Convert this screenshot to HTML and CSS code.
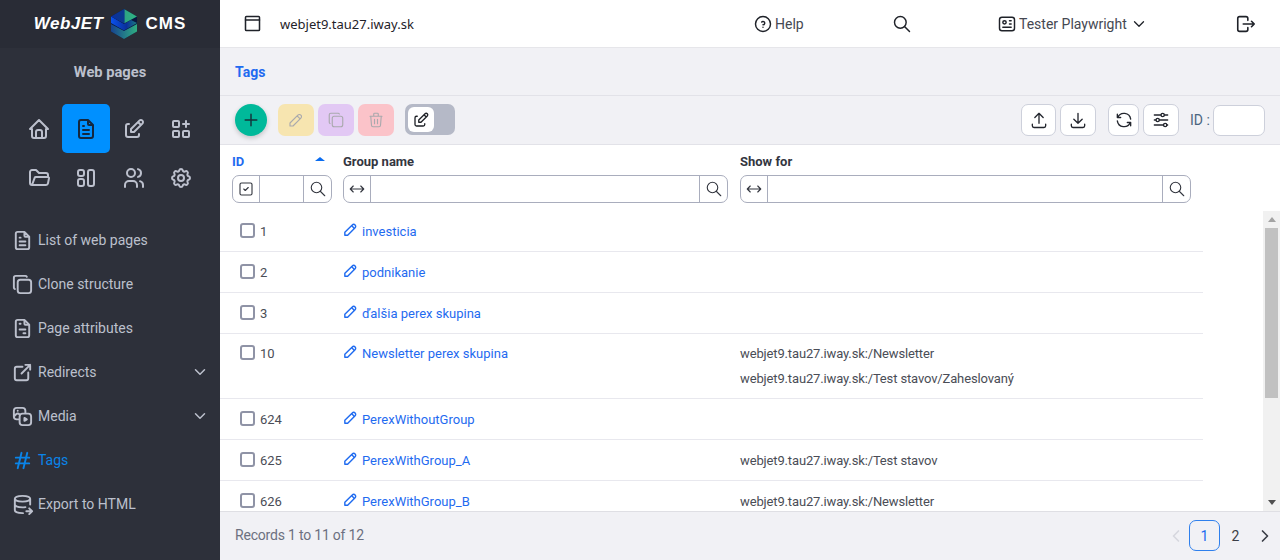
FILE: index.html
```html
<!DOCTYPE html>
<html lang="en">
<head>
  <meta charset="UTF-8">
  <title>Tags</title>
  <link rel="stylesheet" href="styles.css">
</head>
<body>

  <svg class="sprite" xmlns="http://www.w3.org/2000/svg">
    <symbol id="i-home" viewBox="0 0 24 24"><path d="M5 12h-2l9-9l9 9h-2M5 12v7a2 2 0 0 0 2 2h10a2 2 0 0 0 2-2v-7M9 21v-6a2 2 0 0 1 2-2h2a2 2 0 0 1 2 2v6"/></symbol>
    <symbol id="i-file" viewBox="0 0 24 24"><path d="M14 3v4a1 1 0 0 0 1 1h4M17 21h-10a2 2 0 0 1-2-2v-14a2 2 0 0 1 2-2h7l5 5v11a2 2 0 0 1-2 2zM9 9h1M9 13h6M9 17h6"/></symbol>
    <symbol id="i-attr" viewBox="0 0 24 24"><path d="M14 3v4a1 1 0 0 0 1 1h4M17 21h-10a2 2 0 0 1-2-2v-14a2 2 0 0 1 2-2h7l5 5v11a2 2 0 0 1-2 2zM9 7h1M9 13h6M13 17h2"/></symbol>
    <symbol id="i-edit" viewBox="0 0 24 24"><path d="M7 7h-1a2 2 0 0 0-2 2v9a2 2 0 0 0 2 2h9a2 2 0 0 0 2-2v-1M20.385 6.585a2.1 2.1 0 0 0-2.97-2.97l-8.415 8.385v3h3l8.385-8.415zM16 5l3 3"/></symbol>
    <symbol id="i-apps" viewBox="0 0 24 24"><rect x="4" y="4" width="6" height="6" rx="1"/><rect x="4" y="14" width="6" height="6" rx="1"/><rect x="14" y="14" width="6" height="6" rx="1"/><path d="M14 7h6M17 4v6"/></symbol>
    <symbol id="i-folder" viewBox="0 0 24 24"><path d="M5 19l2.757-7.351a1 1 0 0 1 .936-.649h12.307a1 1 0 0 1 .986 1.164l-.996 5.211a2 2 0 0 1-1.964 1.625h-14.026a2 2 0 0 1-2-2v-11a2 2 0 0 1 2-2h4l3 3h7a2 2 0 0 1 2 2v2"/></symbol>
    <symbol id="i-layout" viewBox="0 0 24 24"><rect x="4" y="4" width="6" height="6" rx="2"/><rect x="4" y="13" width="6" height="7" rx="2"/><rect x="14" y="4" width="6" height="16" rx="2"/></symbol>
    <symbol id="i-users" viewBox="0 0 24 24"><circle cx="9" cy="7" r="4"/><path d="M3 21v-2a4 4 0 0 1 4-4h4a4 4 0 0 1 4 4v2M16 3.13a4 4 0 0 1 0 7.75M21 21v-2a4 4 0 0 0-3-3.85"/></symbol>
    <symbol id="i-settings" viewBox="0 0 24 24"><path d="M10.325 4.317c.426-1.756 2.924-1.756 3.35 0a1.724 1.724 0 0 0 2.573 1.066c1.543-.94 3.31 .826 2.37 2.37a1.724 1.724 0 0 0 1.065 2.572c1.756 .426 1.756 2.924 0 3.35a1.724 1.724 0 0 0-1.066 2.573c.94 1.543-.826 3.31-2.37 2.37a1.724 1.724 0 0 0-2.572 1.065c-.426 1.756-2.924 1.756-3.35 0a1.724 1.724 0 0 0-2.573-1.066c-1.543 .94-3.31-.826-2.37-2.37a1.724 1.724 0 0 0-1.065-2.572c-1.756-.426-1.756-2.924 0-3.35a1.724 1.724 0 0 0 1.066-2.573c-.94-1.543 .826-3.31 2.37-2.37c1 .608 2.296 .07 2.572-1.065z"/><circle cx="12" cy="12" r="3"/></symbol>
    <symbol id="i-copy" viewBox="0 0 24 24"><path d="M7 9.667a2.667 2.667 0 0 1 2.667-2.667h8.666a2.667 2.667 0 0 1 2.667 2.667v8.666a2.667 2.667 0 0 1-2.667 2.667h-8.666a2.667 2.667 0 0 1-2.667-2.667zM4.012 16.737a2.005 2.005 0 0 1-1.012-1.737v-10c0-1.1 .9-2 2-2h10c.75 0 1.158 .385 1.5 1"/></symbol>
    <symbol id="i-link" viewBox="0 0 24 24"><path d="M12 6h-6a2 2 0 0 0-2 2v10a2 2 0 0 0 2 2h10a2 2 0 0 0 2-2v-6M11 13l9-9M15 4h5v5"/></symbol>
    <symbol id="i-media" viewBox="0 0 24 24"><path d="M9 15h-3a3 3 0 0 1-3-3v-6a3 3 0 0 1 3-3h6a3 3 0 0 1 3 3v3M9 12a3 3 0 0 1 3-3h6a3 3 0 0 1 3 3v6a3 3 0 0 1-3 3h-6a3 3 0 0 1-3-3zM3 12l2.296-2.296a2.41 2.41 0 0 1 3.408 0l.296 .296M14 13.5v3l2.5-1.5zM7 6v.01"/></symbol>
    <symbol id="i-hash" viewBox="0 0 24 24"><path d="M5 9h14M5 15h14M11 4l-4 16M17 4l-4 16"/></symbol>
    <symbol id="i-export" viewBox="0 0 24 24"><path d="M4 6c0 1.657 3.582 3 8 3s8-1.343 8-3s-3.582-3-8-3s-8 1.343-8 3M4 6v6c0 1.657 3.582 3 8 3c1.075 0 2.1-.08 3.037-.224M20 12v-6M4 12v6c0 1.657 3.582 3 8 3c.166 0 .331-.002 .495-.006M16 19h6M19 16l3 3l-3 3"/></symbol>
    <symbol id="i-down" viewBox="0 0 24 24"><path d="M6 9l6 6l6-6"/></symbol>
    <symbol id="i-left" viewBox="0 0 24 24"><path d="M15 6l-6 6l6 6"/></symbol>
    <symbol id="i-right" viewBox="0 0 24 24"><path d="M9 6l6 6l-6 6"/></symbol>
    <symbol id="i-browser" viewBox="0 0 24 24"><rect x="4" y="4" width="16" height="16" rx="1"/><path d="M4 8h16"/></symbol>
    <symbol id="i-help" viewBox="0 0 24 24"><circle cx="12" cy="12" r="9"/><path d="M12 16v.01M12 13a2 2 0 0 0 .914-3.782a1.98 1.98 0 0 0-2.414 .483"/></symbol>
    <symbol id="i-search" viewBox="0 0 24 24"><circle cx="10" cy="10" r="7"/><path d="M21 21l-6-6"/></symbol>
    <symbol id="i-id" viewBox="0 0 24 24"><rect x="3" y="4" width="18" height="16" rx="3"/><circle cx="9" cy="10" r="2"/><path d="M15 8h2M15 12h2M7 16h10"/></symbol>
    <symbol id="i-logout" viewBox="0 0 24 24"><path d="M14 8v-2a2 2 0 0 0-2-2h-7a2 2 0 0 0-2 2v12a2 2 0 0 0 2 2h7a2 2 0 0 0 2-2v-2M9 12h12l-3-3M18 15l3-3"/></symbol>
    <symbol id="i-plus" viewBox="0 0 24 24"><path d="M12 5v14M5 12h14"/></symbol>
    <symbol id="i-pencil" viewBox="0 0 24 24"><path d="M4 20h4l10.5-10.5a2.828 2.828 0 1 0-4-4l-10.5 10.5v4M13.5 6.5l4 4"/></symbol>
    <symbol id="i-trash" viewBox="0 0 24 24"><path d="M4 7h16M10 11v6M14 11v6M5 7l1 12a2 2 0 0 0 2 2h8a2 2 0 0 0 2-2l1-12M9 7v-3a1 1 0 0 1 1-1h4a1 1 0 0 1 1 1v3"/></symbol>
    <symbol id="i-upload" viewBox="0 0 24 24"><path d="M4 17v2a2 2 0 0 0 2 2h12a2 2 0 0 0 2-2v-2M7 9l5-5l5 5M12 4v12"/></symbol>
    <symbol id="i-download" viewBox="0 0 24 24"><path d="M4 17v2a2 2 0 0 0 2 2h12a2 2 0 0 0 2-2v-2M7 11l5 5l5-5M12 4v12"/></symbol>
    <symbol id="i-refresh" viewBox="0 0 24 24"><path d="M20 11a8.1 8.1 0 0 0-15.5-2m-.5-4v4h4M4 13a8.1 8.1 0 0 0 15.5 2m.5 4v-4h-4"/></symbol>
    <symbol id="i-sliders" viewBox="0 0 24 24"><circle cx="14" cy="6" r="2"/><path d="M4 6h8M16 6h4"/><circle cx="8" cy="12" r="2"/><path d="M4 12h2M10 12h10"/><circle cx="17" cy="18" r="2"/><path d="M4 18h11M19 18h1"/></symbol>
    <symbol id="i-check" viewBox="0 0 24 24"><rect x="4" y="4" width="16" height="16" rx="2"/><path d="M9 12l2 2l4-4"/></symbol>
    <symbol id="i-arrows" viewBox="0 0 24 24"><path d="M7 8l-4 4l4 4M17 8l4 4l-4 4M3 12h18"/></symbol>
  </svg>

  <div class="app">
    <aside class="sidebar">
      <div class="logo">
        <span class="logo-text">WebJET</span>
        <svg class="logo-mark" viewBox="0 0 26 30">
          <defs>
            <linearGradient id="lg-top"><stop offset="0" stop-color="#0b2fa0"/><stop offset=".5" stop-color="#0b3a8c"/><stop offset=".55" stop-color="#2ea583"/><stop offset="1" stop-color="#2fb583"/></linearGradient>
            <linearGradient id="lg-mid"><stop offset="0" stop-color="#0a52ee"/><stop offset=".6" stop-color="#0a2f9a"/><stop offset="1" stop-color="#1c7f80"/></linearGradient>
            <linearGradient id="lg-bot"><stop offset="0" stop-color="#17438f"/><stop offset="1" stop-color="#2fae82"/></linearGradient>
          </defs>
          <polygon points="13,0 26,7.5 26,22.5 13,30 0,22.5 0,7.5" fill="#08163f"/>
          <polygon points="0,15 13,22 26,15 26,22.5 13,30 0,22.5" fill="url(#lg-bot)"/>
          <polygon points="0,7.5 13,15 20,11 26,14 13,21.5 0,14" fill="url(#lg-mid)"/>
          <polygon points="13,0 26,7.5 13,14.5 0,7.5" fill="url(#lg-top)"/>
        </svg>
        <span class="logo-text logo-cms">CMS</span>
      </div>
      <div class="side-title">Web pages</div>
      <div class="side-icons">
        <a class="side-icon"><svg class="ico"><use href="#i-home"/></svg></a>
        <a class="side-icon active"><svg class="ico"><use href="#i-file"/></svg></a>
        <a class="side-icon"><svg class="ico"><use href="#i-edit"/></svg></a>
        <a class="side-icon"><svg class="ico"><use href="#i-apps"/></svg></a>
        <a class="side-icon"><svg class="ico"><use href="#i-folder"/></svg></a>
        <a class="side-icon"><svg class="ico"><use href="#i-layout"/></svg></a>
        <a class="side-icon"><svg class="ico"><use href="#i-users"/></svg></a>
        <a class="side-icon"><svg class="ico"><use href="#i-settings"/></svg></a>
      </div>
      <ul class="side-menu">
        <li><svg class="ico"><use href="#i-file"/></svg>List of web pages</li>
        <li><svg class="ico"><use href="#i-copy"/></svg>Clone structure</li>
        <li><svg class="ico"><use href="#i-attr"/></svg>Page attributes</li>
        <li><svg class="ico"><use href="#i-link"/></svg>Redirects<svg class="ico caret"><use href="#i-down"/></svg></li>
        <li><svg class="ico"><use href="#i-media"/></svg>Media<svg class="ico caret"><use href="#i-down"/></svg></li>
        <li class="current"><svg class="ico"><use href="#i-hash"/></svg>Tags</li>
        <li><svg class="ico"><use href="#i-export"/></svg>Export to HTML</li>
      </ul>
    </aside>

    <main class="main">
      <header class="topbar">
        <div class="top-domain"><svg class="ico"><use href="#i-browser"/></svg><span>webjet9.tau27.iway.sk</span></div>
        <div class="top-help"><svg class="ico"><use href="#i-help"/></svg><span>Help</span></div>
        <div class="top-search"><svg class="ico"><use href="#i-search"/></svg></div>
        <div class="top-user"><svg class="ico"><use href="#i-id"/></svg><span>Tester Playwright</span><svg class="ico"><use href="#i-down"/></svg></div>
        <div class="top-logout"><svg class="ico"><use href="#i-logout"/></svg></div>
      </header>

      <div class="titlebar">Tags</div>

      <div class="toolbar">
        <button class="btn-add"><svg class="ico"><use href="#i-plus"/></svg></button>
        <button class="btn-soft yellow"><svg class="ico"><use href="#i-pencil"/></svg></button>
        <button class="btn-soft purple"><svg class="ico"><use href="#i-copy"/></svg></button>
        <button class="btn-soft red"><svg class="ico"><use href="#i-trash"/></svg></button>
        <div class="toggle"><span class="knob"><svg class="ico"><use href="#i-edit"/></svg></span></div>
        <div class="tools">
          <button class="btn-tool w35"><svg class="ico"><use href="#i-upload"/></svg></button>
          <button class="btn-tool w36"><svg class="ico"><use href="#i-download"/></svg></button>
          <button class="btn-tool w31 gap"><svg class="ico"><use href="#i-refresh"/></svg></button>
          <button class="btn-tool w36"><svg class="ico"><use href="#i-sliders"/></svg></button>
          <label class="id-label">ID :</label>
          <input class="id-input" type="text">
        </div>
      </div>

      <div class="thead">
        <div class="th-labels">
          <div class="th sorted">ID<span class="sort-arrow"></span></div>
          <div class="th">Group name</div>
          <div class="th">Show for</div>
        </div>
        <div class="th-filters">
          <div class="filter f-id"><span class="f-btn"><svg class="ico"><use href="#i-check"/></svg></span><input type="text"><span class="f-btn"><svg class="ico"><use href="#i-search"/></svg></span></div>
          <div class="filter f-name"><span class="f-btn"><svg class="ico"><use href="#i-arrows"/></svg></span><input type="text"><span class="f-btn"><svg class="ico"><use href="#i-search"/></svg></span></div>
          <div class="filter"><span class="f-btn"><svg class="ico"><use href="#i-arrows"/></svg></span><input type="text"><span class="f-btn"><svg class="ico"><use href="#i-search"/></svg></span></div>
        </div>
      </div>

      <div class="tbody">
        <div class="rows">
          <div class="row"><div class="c-id"><span class="box"></span>1</div><div class="c-name"><svg class="ico"><use href="#i-pencil"/></svg><a>investicia</a></div><div class="c-show"></div></div>
          <div class="row"><div class="c-id"><span class="box"></span>2</div><div class="c-name"><svg class="ico"><use href="#i-pencil"/></svg><a>podnikanie</a></div><div class="c-show"></div></div>
          <div class="row"><div class="c-id"><span class="box"></span>3</div><div class="c-name"><svg class="ico"><use href="#i-pencil"/></svg><a>ďalšia perex skupina</a></div><div class="c-show"></div></div>
          <div class="row multi"><div class="c-id"><span class="box"></span>10</div><div class="c-name"><svg class="ico"><use href="#i-pencil"/></svg><a>Newsletter perex skupina</a></div><div class="c-show"><p>webjet9.tau27.iway.sk:/Newsletter</p><p>webjet9.tau27.iway.sk:/Test stavov/Zaheslovaný</p></div></div>
          <div class="row"><div class="c-id"><span class="box"></span>624</div><div class="c-name"><svg class="ico"><use href="#i-pencil"/></svg><a>PerexWithoutGroup</a></div><div class="c-show"></div></div>
          <div class="row"><div class="c-id"><span class="box"></span>625</div><div class="c-name"><svg class="ico"><use href="#i-pencil"/></svg><a>PerexWithGroup_A</a></div><div class="c-show"><p>webjet9.tau27.iway.sk:/Test stavov</p></div></div>
          <div class="row"><div class="c-id"><span class="box"></span>626</div><div class="c-name"><svg class="ico"><use href="#i-pencil"/></svg><a>PerexWithGroup_B</a></div><div class="c-show"><p>webjet9.tau27.iway.sk:/Newsletter</p></div></div>
        </div>
        <div class="vscroll">
          <span class="vs-up"></span>
          <span class="vs-thumb"></span>
          <span class="vs-down"></span>
        </div>
      </div>

      <footer class="pager">
        <span class="records">Records 1 to 11 of 12</span>
        <div class="pages">
          <a class="pg-arrow off"><svg class="ico"><use href="#i-left"/></svg></a>
          <a class="pg current">1</a>
          <a class="pg">2</a>
          <a class="pg-arrow"><svg class="ico"><use href="#i-right"/></svg></a>
        </div>
      </footer>
    </main>
  </div>

</body>
</html>
```

FILE: styles.css
```css
* { box-sizing: border-box; }
html, body { height: 100%; }
body { margin: 0; font-family: Roboto, sans-serif; font-size: 13px; color: #3a3d46; background: #fff; overflow: hidden; }
.sprite { display: none; }
.ico { width: 20px; height: 20px; fill: none; stroke: currentColor; stroke-width: 1.75; stroke-linecap: round; stroke-linejoin: round; flex: none; }
button { border: 0; padding: 0; font: inherit; cursor: pointer; display: flex; align-items: center; justify-content: center; }
input { font: inherit; outline: 0; }

.app { display: flex; height: 560px; }

/* sidebar */
.sidebar { width: 220px; flex: none; background: #2d303a; color: #bcc0cd; }
.logo { height: 48px; background: #292c36; display: flex; align-items: center; justify-content: center; gap: 8px; }
.logo-text { font-family: "Liberation Sans", sans-serif; font-weight: 700; font-style: italic; font-size: 17px; color: #fff; letter-spacing: .5px; }
.logo-cms { font-style: normal; letter-spacing: 1px; }
.logo-mark { width: 26px; height: 30px; }
.side-title { height: 48px; margin-bottom: 8px; display: flex; align-items: center; justify-content: center; font-size: 14.7px; font-weight: 700; color: #bcc0cd; }
.side-icons { display: grid; grid-template-columns: repeat(4, 47.5px); grid-auto-rows: 49px; padding-left: 15px; }
.side-icon { display: flex; align-items: center; justify-content: center; border-radius: 5px; }
.side-icon .ico { width: 24px; height: 24px; stroke-width: 2; }
.side-icon.active { background: #0090ff; color: #14273f; margin-left: -.5px; }
.side-menu { list-style: none; margin: 16px 0 0; padding: 0; }
.side-menu li { height: 44px; display: flex; align-items: center; padding-left: 11px; font-size: 14px; }
.side-menu li > .ico:first-child { width: 23px; height: 23px; stroke-width: 2; margin-right: 4px; }
.side-menu .caret { width: 18px; height: 18px; margin-left: auto; margin-right: 11px; stroke-width: 2; }
.side-menu .current { color: #0a84e8; }

/* top bar */
.main { flex: 1; min-width: 0; display: flex; flex-direction: column; background: #f1f1f5; }
.topbar { height: 48px; flex: none; background: #fff; border-bottom: 1px solid #e6e6ea; display: flex; align-items: center; color: #1f2229; font-size: 14px; }
.top-domain { width: 533px; padding-left: 22px; display: flex; align-items: center; gap: 17px; font-family: "Noto Sans", sans-serif; font-size: 13px; }
.top-domain .ico { width: 21px; height: 21px; }
.top-help { width: 139px; display: flex; align-items: center; gap: 2px; color: #454852; }
.top-help .ico { color: #1f2229; }
.top-search { width: 105px; display: flex; }
.top-logout .ico { width: 22px; height: 22px; }
.top-user { width: 238px; display: flex; align-items: center; gap: 2px; color: #454852; }
.top-user .ico { color: #1f2229; }
.top-user .ico:last-child { width: 18px; height: 18px; margin-left: 1px; }
.top-logout { display: flex; }

.titlebar { height: 48px; flex: none; padding-left: 15px; display: flex; align-items: center; font-weight: 700; font-size: 14px; color: #1f6bf0; border-bottom: 1px solid #e2e2e8; }

/* toolbar */
.toolbar { height: 49px; flex: none; padding: 8px 15px 0; display: flex; align-items: flex-start; border-bottom: 1px solid #e2e2e8; }
.btn-add { width: 32px; height: 32px; border-radius: 50%; background: #00b99a; color: #14343a; box-shadow: 0 2px 5px rgba(0,0,0,.2); margin-right: 11px; }
.btn-soft { width: 36px; height: 32px; border-radius: 7px; margin-right: 4px; color: #a9a9ad; }
.btn-soft .ico { width: 18px; height: 18px; stroke-width: 1.5; }
.yellow { background: #f7e5b0; }
.purple { background: #e2c8f4; }
.red { background: #fbc3c9; }
.toggle { width: 50px; height: 31px; margin-left: 7px; border-radius: 7px; background: #b5b9c7; padding: 3px; }
.knob { width: 26px; height: 25px; background: #fff; border-radius: 6px; display: flex; align-items: center; justify-content: center; color: #1d2026; }
.knob .ico { width: 18px; height: 18px; }
.tools { margin-left: auto; display: flex; align-items: center; gap: 4px; height: 32px; }
.btn-tool { height: 32px; background: #fff; border: 1px solid #cdd0db; border-radius: 7px; color: #23262e; }
.btn-tool .ico { width: 20px; height: 20px; stroke-width: 1.6; }
.w35 { width: 35px; }
.w36 { width: 36px; }
.w31 { width: 31px; }
.btn-tool.gap { margin-left: 8px; }
.id-label { width: 19px; margin-left: 7px; color: #4b6580; font-size: 14px; white-space: nowrap; }
.id-input { width: 52px; height: 31px; border: 1px solid #cdd0db; border-radius: 7px; background: #fff; }

/* table */
.thead { flex: none; height: 66px; background: #fff; padding: 5px 0 0 12px; }
.th-labels { display: grid; grid-template-columns: 111px 397px 451px; height: 22px; align-items: center; font-weight: 700; color: #33363f; }
.th { position: relative; }
.th.sorted { color: #1f6bf0; }
.sort-arrow { position: absolute; left: 83px; top: 3px; border: 5px solid transparent; border-top: 0; border-bottom: 4px solid #0a6cf0; }
.th-filters { display: grid; grid-template-columns: 111px 397px 451px; margin-top: 3px; }
.filter { display: flex; height: 28px; border: 1px solid #a9adbd; border-radius: 7px; overflow: hidden; background: #fff; }
.f-id { margin-right: 11px; }
.f-name { margin-right: 12px; }
.filter input { flex: 1; min-width: 0; border: 0; border-left: 1px solid #a9adbd; border-right: 1px solid #a9adbd; padding: 0 4px; }
.f-btn { width: 26px; flex: none; display: flex; align-items: center; justify-content: center; color: #33363f; }
.f-btn .ico { width: 18px; height: 18px; stroke-width: 1.5; }
.f-btn:last-child { width: 27px; }

.tbody { flex: 1; min-height: 0; background: #fff; display: flex; justify-content: space-between; overflow: hidden; }
.rows { width: 983px; flex: none; }
.row { display: grid; grid-template-columns: 111px 397px 1fr; padding: 11px 0 9px 12px; border-bottom: 1px solid #e8e8ee; line-height: 20px; }
.row.multi { padding: 10px 0 9px 12px; }
.c-id { display: flex; align-items: flex-start; color: #4a4d56; }
.box { width: 15px; height: 15px; border: 2px solid #8f93a6; border-radius: 3px; margin: 1px 5px 0 8px; flex: none; }
.c-name { display: flex; align-items: flex-start; color: #1f6bf0; }
.c-name .ico { width: 17px; height: 17px; margin: -1px 3px 0 -1px; stroke-width: 2; }
.c-show { color: #4a4d56; letter-spacing: -.14px; }
.c-show p { margin: 0; }
.c-show p + p { margin-top: 5px; }

/* the scrollbar is drawn, headless chrome hides the real one */
.vscroll { width: 17px; flex: none; background: #f1f1f1; display: flex; flex-direction: column; align-items: center; }
.vs-up { height: 17px; flex: none; display: flex; align-items: center; }
.vs-up::before { content: ""; border: 4.5px solid transparent; border-top: 0; border-bottom: 5px solid #a3a3a3; }
.vs-thumb { width: 13px; height: 170px; background: #c1c1c1; flex: none; }
.vs-down { height: 17px; margin-top: auto; flex: none; display: flex; align-items: center; }
.vs-down::before { content: ""; border: 4.5px solid transparent; border-bottom: 0; border-top: 5px solid #505050; }

/* pager */
.pager { height: 49px; flex: none; border-top: 1px solid #dfdfe4; display: flex; align-items: center; justify-content: space-between; padding: 0 5px 1px 15px; }
.records { color: #6c7080; font-size: 14px; letter-spacing: -.2px; padding-bottom: 1px; }
.pages { display: flex; align-items: center; }
.pg { width: 31px; height: 31px; border-radius: 7px; display: flex; align-items: center; justify-content: center; color: #3a3d46; font-size: 14px; }
.pg.current { border: 1px solid #2f80ed; color: #1f6bf0; }
.pg-arrow { display: flex; margin-left: 4px; color: #3a3d46; }
.pg-arrow .ico { width: 20px; height: 20px; stroke-width: 2; }
.pg-arrow.off { color: #d6d7de; margin: 0 3px 0 0; }
```
